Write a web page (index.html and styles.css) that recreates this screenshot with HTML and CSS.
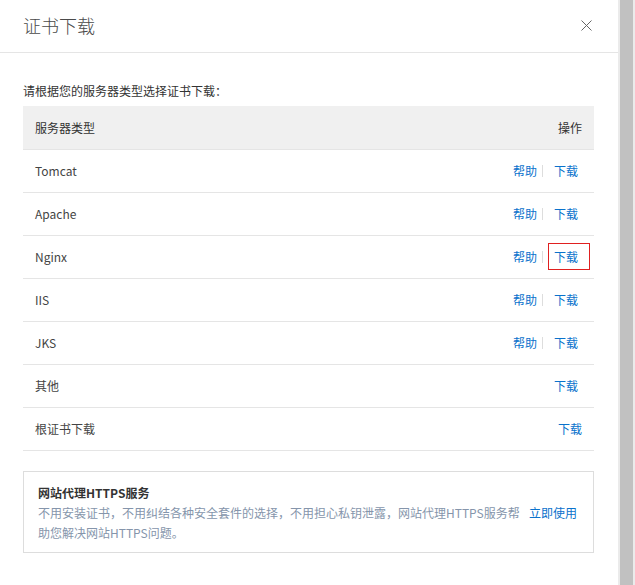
FILE: index.html
```html
<!DOCTYPE html>
<html lang="zh-CN">

<head>
  <meta charset="UTF-8">
  <title>证书下载</title>
  <link rel="stylesheet" href="styles.css">
</head>

<body>
  <div class="page">
    <div class="dialog">
      <!-- 标题栏 -->
      <div class="dialog-head">
        <span class="dialog-title">证书下载</span>
        <span class="close">
          <svg width="11" height="11" viewBox="0 0 11 11">
            <path d="M0.5 0.5 L10.5 10.5 M10.5 0.5 L0.5 10.5" stroke="#666" stroke-width="1" fill="none" />
          </svg>
        </span>
      </div>

      <div class="dialog-body">
        <p class="intro">请根据您的服务器类型选择证书下载：</p>

        <table class="cert-table">
          <thead>
            <tr>
              <th class="col-type">服务器类型</th>
              <th class="col-op">操作</th>
            </tr>
          </thead>
          <tbody>
            <tr>
              <td>Tomcat</td>
              <td class="ops"><a href="#">帮助</a><i class="sep"></i><a class="dl" href="#">下载</a></td>
            </tr>
            <tr>
              <td>Apache</td>
              <td class="ops"><a href="#">帮助</a><i class="sep"></i><a class="dl" href="#">下载</a></td>
            </tr>
            <tr>
              <td>Nginx</td>
              <td class="ops"><a href="#">帮助</a><i class="sep"></i><a class="dl active" href="#">下载</a></td>
            </tr>
            <tr>
              <td>IIS</td>
              <td class="ops"><a href="#">帮助</a><i class="sep"></i><a class="dl" href="#">下载</a></td>
            </tr>
            <tr>
              <td>JKS</td>
              <td class="ops"><a href="#">帮助</a><i class="sep"></i><a class="dl" href="#">下载</a></td>
            </tr>
            <tr>
              <td>其他</td>
              <td class="ops"><a class="dl" href="#">下载</a></td>
            </tr>
            <tr>
              <td>根证书下载</td>
              <td class="ops root"><a href="#">下载</a></td>
            </tr>
          </tbody>
        </table>

        <!-- 网站代理 -->
        <div class="proxy">
          <div class="proxy-title">网站代理HTTPS服务</div>
          <div class="proxy-row">
            <p class="proxy-desc">不用安装证书，不用纠结各种安全套件的选择，不用担心私钥泄露，网站代理HTTPS服务帮助您解决网站HTTPS问题。</p>
            <a class="proxy-link" href="#">立即使用</a>
          </div>
        </div>
      </div>
    </div>

    <div class="scrollbar">
      <div class="thumb"></div>
    </div>
  </div>
</body>

</html>
```

FILE: styles.css
```css
* {
  margin: 0;
  padding: 0;
  box-sizing: border-box;
  font-family: "Segoe UI", "Noto Sans CJK SC", sans-serif;
}

body {
  background-color: #fff;
  color: #333;
  font-size: 12px;
}

a {
  text-decoration: none;
  color: #0a72cc;
}

.page {
  display: flex;
  height: 585px;
}

.dialog {
  width: 618px;
  background-color: #fff;
}

.scrollbar {
  width: 17px;
  background-color: #ebebeb;
  padding: 0 2px;
}

.scrollbar .thumb {
  height: 100%;
  background-color: #c1c1c1;
}

/* 标题栏 */
.dialog-head {
  height: 53px;
  border-bottom: 1px solid #e5e5e5;
  display: flex;
  align-items: center;
  justify-content: space-between;
  padding: 0 26px 2px 23px;
}

.dialog-title {
  font-size: 18px;
  color: #4a4a4a;
  font-weight: 300;
}

.close {
  display: flex;
}

.dialog-body {
  padding: 29px 24px 0 23px;
}

.intro {
  line-height: 18px;
  margin-bottom: 6px;
  color: #333;
}

/* 表格 */
.cert-table {
  width: 100%;
  border-collapse: collapse;
}

.cert-table th,
.cert-table td {
  height: 43px;
  border-bottom: 1px solid #e5e5e5;
  font-weight: normal;
  text-align: left;
  padding: 0 12px;
  color: #444;
}

.cert-table thead th {
  background-color: #f0f0f0;
  color: #333;
}

.cert-table .col-op {
  text-align: right;
}

.cert-table td.ops {
  text-align: right;
  padding-right: 4px;
  white-space: nowrap;
}

.cert-table td.root {
  padding-right: 12px;
}

.ops .sep {
  display: inline-block;
  width: 1px;
  height: 12px;
  background-color: #ddd;
  margin: 0 5px;
  vertical-align: -1px;
}

.ops .dl {
  display: inline-block;
  padding: 6px 11px 6px 5px;
  border: 1px solid transparent;
  line-height: 13px;
}

.ops .dl.active {
  border-color: #e02020;
}

/* 网站代理 */
.proxy {
  margin-top: 20px;
  border: 1px solid #ddd;
  padding: 11px 16px 9px 14px;
}

.proxy-title {
  font-weight: bold;
  line-height: 20px;
  color: #333;
}

.proxy-row {
  display: flex;
  align-items: flex-start;
}

.proxy-desc {
  flex: 1;
  line-height: 20px;
  color: #8595ab;
}

.proxy-link {
  line-height: 20px;
  color: #0a72cc;
}
```
